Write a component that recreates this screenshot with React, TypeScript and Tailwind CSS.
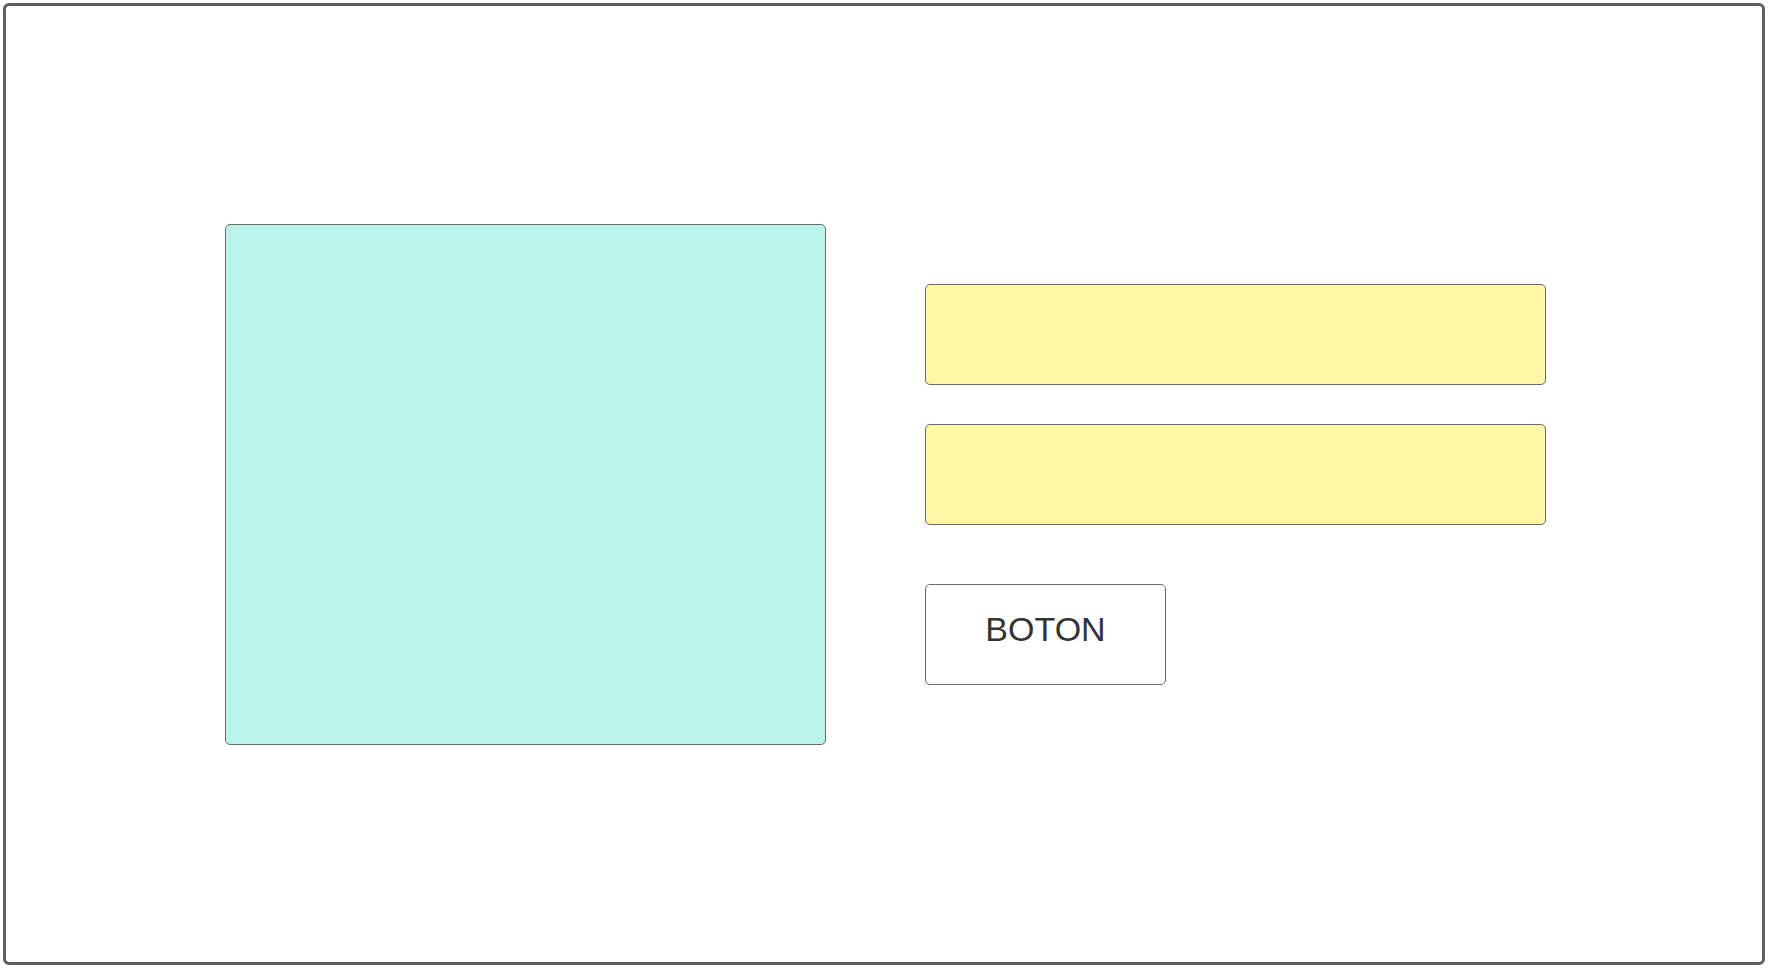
export default function App() {
  return (
    <div className="w-[1770px] h-[968px] bg-white p-[3px]">
      {/* marco exterior */}
      <div className="h-[962px] w-[1762px] rounded-md border-[3px] border-[#5f5f5f] pl-[219px] pt-[218px]">
        <div className="flex items-start gap-[99px]">
          {/* bloque imagen */}
          <div className="w-[601px] h-[521px] rounded-[5px] border border-[#6b6b6b] bg-[#b9f4ea]" />

          {/* columna derecha */}
          <div className="mt-[60px] flex flex-col">
            <div className="w-[621px] h-[101px] rounded-[5px] border border-[#6b6b6b] bg-[#fff7a6]" />
            <div className="mt-[39px] w-[621px] h-[101px] rounded-[5px] border border-[#6b6b6b] bg-[#fff7a6]" />
            <button className="mt-[59px] w-[241px] h-[101px] pb-[10px] rounded-[5px] border border-[#6b6b6b] bg-white text-[34px] text-[#333333] font-['Liberation_Sans',Arial,sans-serif]">
              BOTON
            </button>
          </div>
        </div>
      </div>
    </div>
  );
}
